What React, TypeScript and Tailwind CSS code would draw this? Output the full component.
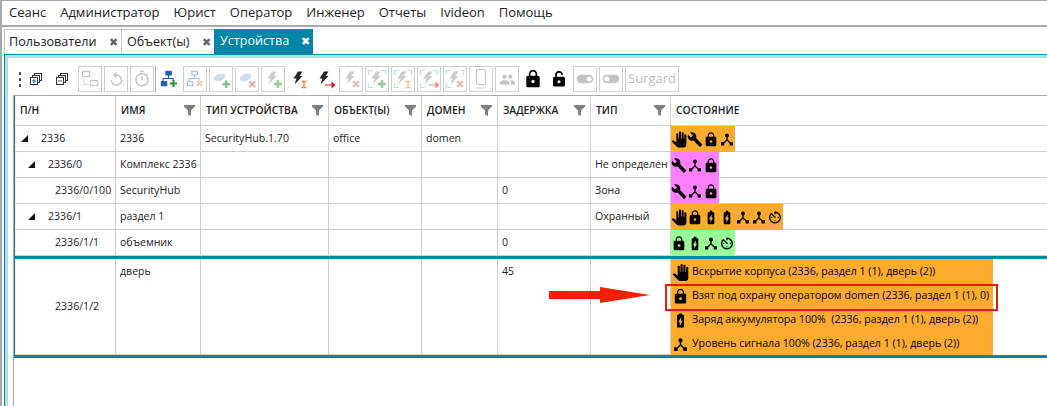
import type { ReactNode } from "react";
import {
  MdAvTimer,
  MdBatteryChargingFull,
  MdBuild,
  MdDeviceHub,
  MdLock,
  MdOutlineTimer,
  MdPanTool,
  MdPeople,
  MdReplay,
  MdToggleOff,
  MdToggleOn,
} from "react-icons/md";

const menu = ["Сеанс", "Администратор", "Юрист", "Оператор", "Инженер", "Отчеты", "Ivideon", "Помощь"];

const GRID = "grid grid-cols-[101px_85px_128px_93px_76px_93px_80px_1fr]";

const columns = [
  { title: "П/Н", filter: false },
  { title: "Имя", filter: true },
  { title: "Тип устройства", filter: true },
  { title: "Объект(ы)", filter: true },
  { title: "Домен", filter: true },
  { title: "Задержка", filter: true },
  { title: "Тип", filter: true },
  { title: "Состояние", filter: false },
];

type StateIcon = "hand" | "wrench" | "lock" | "battery" | "hub" | "timer";

const stateIcons: Record<StateIcon, ReactNode> = {
  hand: <MdPanTool size={17} />,
  wrench: <MdBuild size={17} />,
  lock: <MdLock size={17} />,
  battery: <MdBatteryChargingFull size={17} />,
  hub: <MdDeviceHub size={17} />,
  timer: <MdAvTimer size={17} />,
};

const rows: {
  sn: string;
  depth: number;
  open: boolean;
  cells: string[];
  color: string;
  icons: StateIcon[];
}[] = [
  { sn: "2336", depth: 0, open: true, cells: ["2336", "SecurityHub.1.70", "office", "domen", "", ""], color: "bg-[#ffab2e]", icons: ["hand", "wrench", "lock", "hub"] },
  { sn: "2336/0", depth: 1, open: true, cells: ["Комплекс 2336", "", "", "", "", "Не определен"], color: "bg-[#ff80ff]", icons: ["wrench", "hub", "lock"] },
  { sn: "2336/0/100", depth: 2, open: false, cells: ["SecurityHub", "", "", "", "0", "Зона"], color: "bg-[#ff80ff]", icons: ["wrench", "hub", "lock"] },
  { sn: "2336/1", depth: 1, open: true, cells: ["раздел 1", "", "", "", "", "Охранный"], color: "bg-[#ffab2e]", icons: ["hand", "lock", "battery", "battery", "hub", "hub", "timer"] },
  { sn: "2336/1/1", depth: 2, open: false, cells: ["объемник", "", "", "", "0", ""], color: "bg-[#99ff99]", icons: ["lock", "battery", "hub", "timer"] },
];

const events: { icon: StateIcon; text: string }[] = [
  { icon: "hand", text: "Вскрытие корпуса (2336, раздел 1 (1), дверь (2))" },
  { icon: "lock", text: "Взят под охрану оператором domen (2336, раздел 1 (1), 0)" },
  { icon: "battery", text: "Заряд аккумулятора 100%  (2336, раздел 1 (1), дверь (2))" },
  { icon: "hub", text: "Уровень сигнала 100% (2336, раздел 1 (1), дверь (2))" },
];

function Funnel() {
  return (
    <svg width="11" height="11" viewBox="0 0 11 11" className="shrink-0">
      <path d="M0 0h11v1.5L7 5.5V11L4 9.5v-4L0 1.5z" fill="#7f7f7f" />
    </svg>
  );
}

function Triangle() {
  return (
    <svg width="7" height="7" viewBox="0 0 7 7" className="shrink-0">
      <path d="M7 0v7H0z" fill="#111" />
    </svg>
  );
}

function Stack({ minus }: { minus?: boolean }) {
  return (
    <svg width="14" height="14" viewBox="0 0 14 14" fill="#fff" stroke="#333" strokeWidth="1">
      <rect x="5.5" y="1.5" width="7" height="7" />
      <rect x="3.5" y="3.5" width="7" height="7" />
      <rect x="1.5" y="5.5" width="7" height="7" />
      <path d={minus ? "M3 9h4" : "M3 9h4M5 7v4"} stroke={minus ? "#555" : "#1c5fa8"} />
    </svg>
  );
}

function Mark({ type }: { type: "plus" | "x" | "i" | "arrow" }) {
  if (type === "plus") return <path d="M11 15h8M15 11v8" stroke="#2a9d3a" strokeWidth="2.4" fill="none" />;
  if (type === "x") return <path d="M12 12l6 6M18 12l-6 6" stroke="#e2544a" strokeWidth="1.6" fill="none" />;
  if (type === "i") return <path d="M12.5 12.5h5M12.5 18.5h5M15 12.5v6" stroke="#f0802a" strokeWidth="1.3" fill="none" />;
  return <path d="M10 15.5h6.5v-3l4 3.5-4 3.5v-3H10z" fill="#e8141c" />;
}

function Network({ mark, faded }: { mark: "plus" | "x"; faded?: boolean }) {
  return (
    <svg width="18" height="18" viewBox="0 0 20 20" className={faded ? "opacity-40" : ""}>
      <g fill={faded ? "none" : "#1d5fae"} stroke="#1d5fae" strokeWidth="1.2">
        <rect x="6.5" y="1.5" width="6" height="4" />
        <rect x="1.5" y="13" width="6" height="4.5" />
        <path d="M9.5 5.5v3.5M3.5 13V9.5h11V12" fill="none" />
      </g>
      <Mark type={mark} />
    </svg>
  );
}

function Block({ mark }: { mark: "plus" | "x" }) {
  return (
    <svg width="19" height="19" viewBox="0 0 20 20" className="opacity-60">
      <path d="M2 7.5L7 4h5.5c1 0 1.5 1 1 2v2L9 11.5H4L2 10z" fill="#a9c6e2" />
      <Mark type={mark} />
    </svg>
  );
}

function Bolt({ mark, frame, faded }: { mark: "plus" | "x" | "i" | "arrow"; frame?: boolean; faded?: boolean }) {
  return (
    <svg width="20" height="20" viewBox="0 0 20 20" className={faded ? "opacity-50" : ""}>
      {frame && (
        <path
          d="M1.5 6V1.5H6M14 1.5h4.5V6M1.5 14v4.5H6"
          fill="none"
          stroke="#8db9e3"
          strokeWidth="1.2"
        />
      )}
      <path d="M9 2.5h4.5L10.5 7H13.5L5.5 15.5 7.5 9.5H4.5z" fill={faded ? "#9a9a9a" : "#222"} />
      <Mark type={mark} />
    </svg>
  );
}

function Phone() {
  return (
    <svg width="14" height="22" viewBox="0 0 14 22" fill="none" stroke="#c4c4c4">
      <rect x="2.5" y="1.5" width="9" height="15" rx="1.5" strokeWidth="1.2" />
      <path d="M2 20h10" strokeDasharray="2 1" />
    </svg>
  );
}

function OpenLock() {
  return (
    <svg width="18" height="18" viewBox="0 0 24 24">
      <path d="M8 9V6.5a4 4 0 0 1 8 0" fill="none" stroke="#000" strokeWidth="2.2" />
      <path d="M6 9h12a2 2 0 0 1 2 2v9a2 2 0 0 1-2 2H6a2 2 0 0 1-2-2v-9a2 2 0 0 1 2-2z" fill="#000" />
      <circle cx="12" cy="15.5" r="2" fill="#fff" />
    </svg>
  );
}

function ToolButton({ children }: { children: ReactNode }) {
  return (
    <div className="mx-px flex h-[26px] w-[24px] items-center justify-center border border-[#cfcfcf] text-[#c4c4c4]">
      {children}
    </div>
  );
}

function ToolPlain({ children }: { children: ReactNode }) {
  return <div className="flex h-[26px] w-[26px] items-center justify-center text-black">{children}</div>;
}

function Toolbar() {
  return (
    <div className="flex h-[37px] items-start pl-[6px] pt-[8px]">
      <div className="flex h-[26px] w-[11px] flex-col items-center justify-center gap-[3px]">
        <span className="h-[3px] w-[2px] bg-[#555]" />
        <span className="h-[3px] w-[2px] bg-[#555]" />
        <span className="h-[3px] w-[2px] bg-[#555]" />
      </div>
      <div className="flex h-[26px] w-[22px] items-center justify-center">
        <Stack />
      </div>
      <div className="flex h-[26px] w-[30px] items-center justify-center">
        <Stack minus />
      </div>
      <ToolButton>
        <svg width="20" height="20" viewBox="0 0 20 20" fill="none" stroke="#c4c4c4" strokeWidth="1.2">
          <rect x="2.5" y="2.5" width="7" height="5" />
          <rect x="10.5" y="11.5" width="7" height="5" />
          <path d="M4 9v6.5h5" strokeDasharray="1.5 1" />
        </svg>
      </ToolButton>
      <ToolButton>
        <MdReplay size={17} />
      </ToolButton>
      <ToolButton>
        <MdOutlineTimer size={18} />
      </ToolButton>
      <div className="h-[26px] w-px bg-[#aaa]" />
      <ToolPlain>
        <Network mark="plus" />
      </ToolPlain>
      <ToolButton>
        <Network mark="x" faded />
      </ToolButton>
      <ToolButton>
        <Block mark="plus" />
      </ToolButton>
      <ToolButton>
        <Block mark="x" />
      </ToolButton>
      <ToolButton>
        <Bolt mark="plus" faded />
      </ToolButton>
      <ToolPlain>
        <Bolt mark="i" />
      </ToolPlain>
      <ToolPlain>
        <Bolt mark="arrow" />
      </ToolPlain>
      <ToolButton>
        <Bolt mark="x" faded />
      </ToolButton>
      <ToolButton>
        <Bolt mark="plus" frame faded />
      </ToolButton>
      <ToolButton>
        <Bolt mark="i" frame faded />
      </ToolButton>
      <ToolButton>
        <Bolt mark="arrow" frame faded />
      </ToolButton>
      <ToolButton>
        <Bolt mark="x" frame faded />
      </ToolButton>
      <ToolButton>
        <Phone />
      </ToolButton>
      <ToolButton>
        <MdPeople size={17} />
      </ToolButton>
      <ToolPlain>
        <MdLock size={20} />
      </ToolPlain>
      <ToolPlain>
        <OpenLock />
      </ToolPlain>
      <ToolButton>
        <MdToggleOn size={20} />
      </ToolButton>
      <ToolButton>
        <MdToggleOff size={20} />
      </ToolButton>
      <div className="mx-px flex h-[26px] w-[54px] items-center justify-center border border-[#cfcfcf] text-[13px] text-[#bdbdbd]">
        Surgard
      </div>
    </div>
  );
}

function StateBar({ color, icons }: { color: string; icons: StateIcon[] }) {
  return (
    <div className="flex">
      <div className={`flex items-center ${color}`}>
        {icons.map((icon, i) => (
          <span key={i} className="flex w-[16px] justify-center text-black">
            {stateIcons[icon]}
          </span>
        ))}
      </div>
      <div className="flex-1 border-b border-[#d0d0d0]" />
    </div>
  );
}

function Cell({ children }: { children?: ReactNode }) {
  return (
    <div className="flex items-center overflow-hidden whitespace-nowrap border-r border-b border-[#d0d0d0] pl-[4px]">
      {children}
    </div>
  );
}

export default function App() {
  return (
    <div
      className="flex h-[406px] w-[1047px] flex-col overflow-hidden border-l-2 border-[#a9a9a9] bg-white text-[10.6px] text-[#1c1c1c]"
      style={{ fontFamily: '"Open Sans", "Noto Sans", sans-serif' }}
    >
      <div className="flex h-[27px] shrink-0 items-center gap-[14px] border-t border-b-2 border-[#a9a9a9] pl-[7px] text-[13px]">
        {menu.map((item) => (
          <span key={item}>{item}</span>
        ))}
      </div>

      <div className="flex h-[27px] shrink-0 items-end pl-[2px] text-[12.6px]">
        <div className="flex h-[25px] w-[117px] items-center justify-between border-t border-l border-[#c8c8c8] pl-[4px] pr-[3px]">
          <span>Пользователи</span>
          <span className="text-[11px] text-[#666]">✖</span>
        </div>
        <div className="flex h-[25px] w-[93px] items-center justify-between border-t border-l border-[#c8c8c8] pl-[5px] pr-[3px]">
          <span>Объект(ы)</span>
          <span className="text-[11px] text-[#666]">✖</span>
        </div>
        <div className="flex h-[25px] w-[99px] items-center justify-between bg-[#0086a8] pl-[6px] pr-[3px] text-white">
          <span>Устройства</span>
          <span className="text-[11px]">✖</span>
        </div>
      </div>

      <div className="ml-[2px] flex min-h-0 flex-1 flex-col border-t border-l border-[#0086a8]">
        <div className="flex min-h-0 flex-1 flex-col border-t-[3px] border-l-[3px] border-[#b0dde6]">
          <Toolbar />
          <div className="ml-[5px] flex-1 border-t border-l border-[#a9a9a9]">
            <div className="border-l border-[#0086a8]">
              <div className={`${GRID} h-[30px]`}>
                {columns.map((col) => (
                  <div
                    key={col.title}
                    className="flex items-center justify-between border-r border-b border-[#d0d0d0] pl-[5px] pr-[5px] text-[10.3px] font-semibold uppercase last:border-r-0"
                  >
                    <span className="whitespace-nowrap">{col.title}</span>
                    {col.filter && <Funnel />}
                  </div>
                ))}
              </div>

              {rows.map((row) => (
                <div key={row.sn} className={`${GRID} h-[26px]`}>
                  <Cell>
                    <div
                      className={
                        row.depth === 0
                          ? "flex items-center pl-[2px]"
                          : row.depth === 1
                            ? "flex items-center pl-[9px]"
                            : "flex items-center pl-[36px]"
                      }
                    >
                      {row.open && <Triangle />}
                      <span className={row.open ? "ml-[13px]" : ""}>{row.sn}</span>
                    </div>
                  </Cell>
                  {row.cells.map((text, i) => (
                    <Cell key={i}>{text}</Cell>
                  ))}
                  <StateBar color={row.color} icons={row.icons} />
                </div>
              ))}
            </div>

            <div className="relative border-y-[3px] border-l border-[#0086a8]">
              <div className={`${GRID} h-[96px]`}>
                <div className="flex items-center overflow-hidden border-r border-b border-[#d0d0d0] pl-[40px]">2336/1/2</div>
                <div className="border-r border-b border-[#d0d0d0] pl-[4px] pt-[5px]">дверь</div>
                <div className="border-r border-b border-[#d0d0d0]" />
                <div className="border-r border-b border-[#d0d0d0]" />
                <div className="border-r border-b border-[#d0d0d0]" />
                <div className="border-r border-b border-[#d0d0d0] pl-[4px] pt-[5px]">45</div>
                <div className="border-r border-b border-[#d0d0d0]" />
                <div className="flex flex-col">
                  <div className="w-[322px] bg-[#ffab2e]">
                    {events.map((ev) => (
                      <div key={ev.text} className="flex h-[24px] items-center whitespace-pre pt-[2px] text-black">
                        <span className="mr-[3px] flex w-[18px] justify-center">{stateIcons[ev.icon]}</span>
                        {ev.text}
                      </div>
                    ))}
                  </div>
                </div>
              </div>

              <svg width="102" height="16" viewBox="0 0 102 16" className="absolute left-[534px] top-[28px]">
                <path d="M0 4h51V0l50 8-50 8v-4H0z" fill="#fb1e06" />
              </svg>
              <div className="absolute left-[650px] top-[25px] h-[27px] w-[333px] border-2 border-[#f01808]" />
            </div>
          </div>
        </div>
      </div>
    </div>
  );
}
